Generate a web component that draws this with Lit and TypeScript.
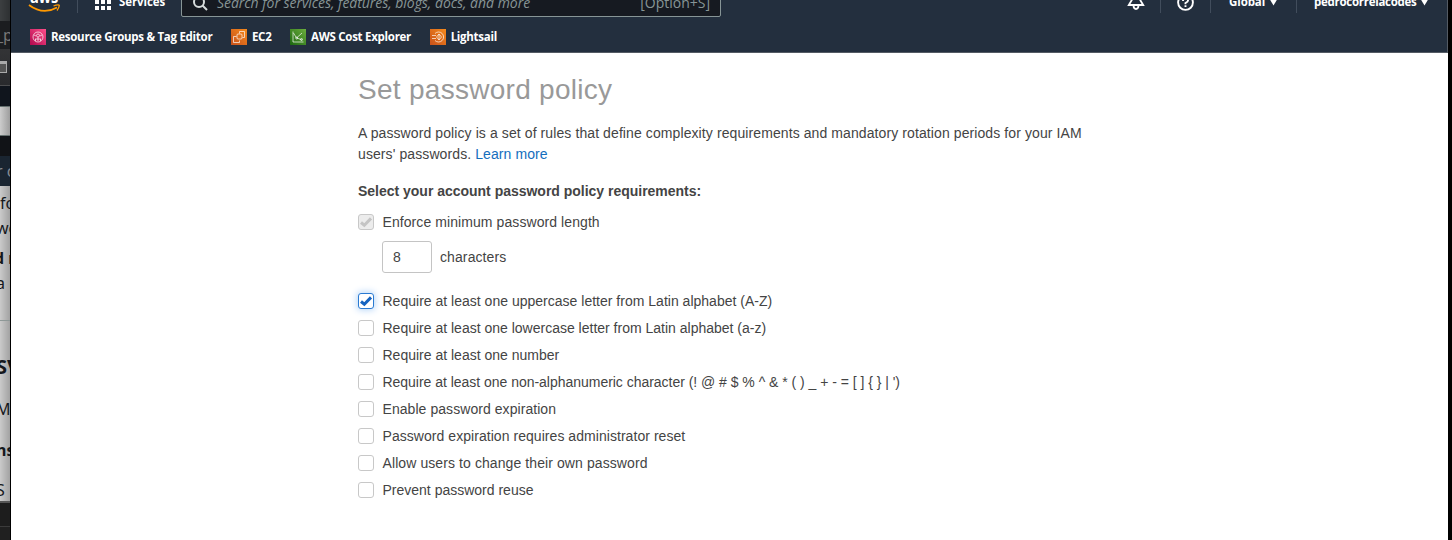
import { LitElement, html, css, svg } from "lit";
import { customElement, property } from "lit/decorators.js";
import { classMap } from "lit/directives/class-map.js";

@customElement("policy-check")
class PolicyCheck extends LitElement {
  @property() label = "";
  @property({ type: Number }) tracking = 0;
  @property({ type: Boolean }) checked = false;
  @property({ type: Boolean }) disabled = false;

  static styles = css`
    :host { display: flex; align-items: center; height: 27px; }
    .box {
      box-sizing: border-box; width: 16px; height: 16px; flex: none;
      border: 1px solid #c8c8c8; border-radius: 3px; background: #fff;
      display: flex; align-items: center; justify-content: center; margin: 0 8.5px 1px 0;
    }
    .on { border-color: #2a7ad2; box-shadow: 0 0 7px 1px #b5d5f8; color: #1563c0; }
    .off { background: #ececec; color: #c4c4c4; }
    svg { display: block; flex: none; }
    .label { white-space: pre; }
  `;

  render() {
    return html`
      <span class=${classMap({ box: true, on: this.checked && !this.disabled, off: this.disabled })}>
        ${this.checked
          ? html`<svg width="14" height="14" viewBox="0 0 14 14"><path d="M2 7.5 L5.3 10.2 L12 3.400" fill="none" stroke="currentColor" stroke-width="3"/></svg>`
          : ""}
      </span><span class="label" style="letter-spacing:${this.tracking}px">${this.label}</span>`;
  }
}

const marks = {
  groups: svg`<circle cx="8" cy="8" r="5"/><circle cx="8" cy="6.5" r="1.5"/><path d="M5 10 H11 M8 8 V12 M4 6 L6 7 M12 6 L10 7 M5.5 12 V10 M10.5 12 V10"/>`,
  ec2: svg`<rect x="6" y="5" width="5" height="5" rx="1"/><path d="M8.500 4.500V2.500H13.500V8.500H11.500M5.500 7.500H2.500V13.500H8.500V11.500"/>`,
  cost: svg`<path d="M3 2.500V13H13.500M3.500 4L6.500 9L12 4M7 9L12 11"/><circle cx="6.700" cy="9" r="1"/><circle cx="11.500" cy="10.500" r="1"/>`,
  sail: svg`<path d="M5 4.500A5 5 0 1 1 5 11.500M2 6.500H6M2 9.500H6M9 5V11M9 5L6.500 8L9 11L11.500 8Z"/>`,
};

@customElement("app-root")
class AppRoot extends LitElement {
  static styles = css`
    :host {
      display: flex; width: 1452px; height: 540px; overflow: hidden; background: #000;
      font: 14px/21px "Liberation Sans", Arial, sans-serif; color: #444;
    }
    .behind { width: 10px; flex: none; overflow: hidden; display: flex; flex-direction: column; margin-right: 1px; }
    .seg { flex: none; box-sizing: border-box; white-space: pre; display: flex; align-items: center; }
    .s1 { height: 21px; background: linear-gradient(90deg, #3c3f41, #2d3032); }
    .s2 { height: 28px; background: #1b1d20; color: #777; font: 16px "Noto Sans", sans-serif; }
    .s3 { height: 37px; background: linear-gradient(#333436, #292a2d); border-bottom: 1px solid #4c4d4f; }
    .s4 { height: 20px; background: #10151d; }
    .s5 { height: 30px; background: linear-gradient(90deg, #ccc, #9d9d9d); border-top: 1px solid #65706f; border-bottom: 1px solid #65706f; }
    .s6 { height: 20px; background: #111317; }
    .s7 { height: 30px; background: #1a2531; color: #858b91; font: 16px "Noto Sans", sans-serif; }
    .page { height: 315px; flex: none; overflow: hidden; background: linear-gradient(90deg, #cacaca, #a2a2a2); color: #15181c; font-family: "Noto Sans", sans-serif; }
    .s9 { height: 25px; background: #1d1d1d; border-top: 2px solid #555; }
    .s10 { flex: 1; background: #202020; border-top: 1px solid #3b3b3b; }
    .rule { height: 1px; background: #8e9897; }
    .h34 { height: 34px; } .h16 { height: 16px; } .h44 { height: 44px; } .h6 { height: 6px; }
    .h24 { height: 24px; } .h45 { height: 45px; } .h37 { height: 37px; }
    .h42 { height: 42px; }
    .f16 { font-size: 16px; } .f20 { font-size: 20px; }
    .b { font-weight: 700; }
    .nudge { margin-left: -4px; }
    .nudge.more { margin-left: -6px; }
    .tab-icon { width: 6px; height: 8px; border: 1px solid #aaa; border-top-width: 3px; border-left: 0; background: #555; }

    .window { width: 1437px; flex: none; display: flex; flex-direction: column; background: #fff; }
    .header {
      box-sizing: border-box; height: 53px; overflow: hidden; background: #232f3e; color: #fff;
      border-right: 1px solid #545b64; border-bottom: 1px solid #545b64;
      font: 700 11.5px/16px "Open Sans", "Noto Sans", sans-serif; letter-spacing: -0.28px;
    }
    .top { margin-top: -18px; height: 40px; display: flex; align-items: center; white-space: pre; }
    .top svg { display: block; flex: none; }
    .aws { margin-left: 16px; width: 34px; }
    .div { width: 1px; height: 22px; background: #414d5c; flex: none; }
    .div.first { margin-left: 16px; margin-right: 17px; }
    .services { margin-left: 8px; width: 62px; letter-spacing: -0.1px; }
    .search {
      box-sizing: border-box; width: 540px; height: 34px; border: 1px solid #879596; border-radius: 2px;
      background: #161a21; color: #879596; display: flex; align-items: center; padding: 0 10px 0 11px;
      font-size: 14px; font-weight: 400; margin-top: -4px; letter-spacing: 0;
    }
    .ph { margin-left: 9px; font-style: italic; flex: 1; letter-spacing: -0.04px; margin-top: 6px; }
    .key { margin-top: 6px; }
    .search svg { margin-top: 6px; }
    .right { margin-left: auto; display: flex; align-items: center; height: 100%; }
    .bell { margin: -2px 15px 0 0; }
    .help { margin: 0 16px; }
    .global { margin-left: 18px; width: 40px; letter-spacing: -0.1px; }
    .user { margin-left: 17px; width: 106px; }
    .caret { margin-right: 18px; }
    .favs { display: flex; align-items: center; height: 30px; padding-left: 19px; gap: 18.6px; white-space: pre; }
    .fav { display: flex; align-items: center; gap: 5px; }
    .mark { display: block; stroke: #fff; stroke-opacity: .75; fill: none; stroke-width: .9; }
    .groups { background: linear-gradient(45deg, #b0084d, #ff4f8b); }
    .ec2, .sail { background: linear-gradient(45deg, #c8511b, #f58a1c); }
    .cost { background: linear-gradient(45deg, #1b660f, #6cae3e); }

    .main { padding: 19px 0 0 347px; width: 740px; display: flex; flex-direction: column; }
    h1 { margin: 0; font-size: 28px; line-height: 36px; font-weight: 400; color: #999; letter-spacing: 0.28px; }
    .intro { margin-top: 15px; }
    .line { white-space: pre; letter-spacing: 0.095px; }
    .link { color: #146ebd; }
    h2 { margin: 16px 0 0; font-size: 14px; line-height: 21px; letter-spacing: -0.015px; }
    .first-check { margin-top: 7px; }
    .length { display: flex; align-items: center; margin: 5px 0 15px 24px; gap: 8px; letter-spacing: 0.1px; }
    .input { box-sizing: border-box; width: 50px; height: 32px; border: 1px solid #c4c4c4; border-radius: 3px; padding-left: 10px; display: flex; align-items: center; }
  `;

  private fav(kind: keyof typeof marks, name: string) {
    return html`<span class="fav"><svg class="mark ${kind}" width="16" height="16" viewBox="0 0 16 16">${marks[kind]}</svg><span>${name}</span></span>`;
  }

  private caret() {
    return html`<svg class="caret" width="9" height="8" viewBox="0 0 9 8"><path d="M0 0H9L4.500 7.500Z" fill="#fff"/></svg>`;
  }

  render() {
    const rules: [string, number][] = [
      ["Require at least one uppercase letter from Latin alphabet (A-Z)", 0.01],
      ["Require at least one lowercase letter from Latin alphabet (a-z)", 0],
      ["Require at least one number", 0],
      ["Require at least one non-alphanumeric character (! @ # $ % ^ & * ( ) _ + - = [ ] { } | ')", -0.025],
      ["Enable password expiration", 0.06],
      ["Password expiration requires administrator reset", 0.05],
      ["Allow users to change their own password", 0.09],
      ["Prevent password reuse", 0],
    ];
    return html`
      <div class="behind">
        <div class="seg s1"></div>
        <div class="seg s2"><span class="nudge">_p</span></div>
        <div class="seg s3"><span class="tab-icon"></span></div>
        <div class="seg s4"></div><div class="seg s5"></div><div class="seg s6"></div>
        <div class="seg s7"><span class="nudge">r c</span></div>
        <div class="page">
          <div class="seg h34 f16">fo</div>
          <div class="seg h16 f16"><span class="nudge">wo</span></div>
          <div class="seg h44 f16 b"><span class="nudge more">d n</span></div>
          <div class="seg h6 f16"><span class="nudge">a n</span></div>
          <div class="h34"></div>
          <div class="rule"></div>
          <div class="h24"></div>
          <div class="seg h42 f20 b"><span class="nudge">SV</span></div>
          <div class="seg h45 f16"><span class="nudge">M.</span></div>
          <div class="seg h37 f16 b"><span class="nudge">ns</span></div>
          <div class="seg h42 f16"><span class="nudge">S</span></div>
        </div>
        <div class="seg s9"></div><div class="seg s10"></div>
      </div>
      <div class="window">
        <div class="header">
          <div class="top">
            <svg class="aws" width="34" height="30" viewBox="0 0 34 30">
              <text x="3" y="16" font-family="Open Sans, sans-serif" font-weight="700" font-size="18" textLength="28" lengthAdjust="spacingAndGlyphs" fill="#fff">aws</text>
              <path d="M2 18Q16 28.500 30 20.500" fill="none" stroke="#f90" stroke-width="1.800"/>
              <path d="M26.500 19Q32 17 32.300 18.500Q32 21 30 23.500" fill="none" stroke="#f90" stroke-width="1.300"/>
            </svg>
            <span class="div first"></span>
            <svg width="16" height="16" viewBox="0 0 16 16" fill="#fff">
              ${[0, 6, 12].map((y) => [0, 6, 12].map((x) => svg`<rect x=${x} y=${y} width="4" height="4"/>`))}
            </svg>
            <span class="services">Services</span>
            <div class="search">
              <svg width="15" height="15" viewBox="0 0 15 15" fill="none" stroke="#d5dbdb" stroke-width="2"><circle cx="6" cy="6" r="5"/><path d="M9.500 9.500L14 14"/></svg>
              <span class="ph">Search for services, features, blogs, docs, and more</span>
              <span class="key">[Option+S]</span>
            </div>
            <div class="right">
              <svg class="bell" width="18" height="18" viewBox="0 0 18 18" fill="none" stroke="#fff" stroke-width="1.800"><path d="M9 1C5.500 1 4.800 3 4.800 5V8L1.800 13H16.200L13.200 8V5C13.200 3 12.500 1 9 1ZM6.500 13.500Q6.700 17 9 17T11.500 13.500"/></svg>
              <span class="div"></span>
              <svg class="help" width="17" height="17" viewBox="0 0 17 17" fill="none" stroke="#fff" stroke-width="1.900"><circle cx="8.500" cy="8.500" r="7.400"/><path d="M6 7Q6 4.500 8.500 4.500T11 6.700Q11 7.700 8.500 9V10.300M8.500 11.300V13"/></svg>
              <span class="div"></span>
              <span class="global">Global</span>${this.caret()}
              <span class="div"></span>
              <span class="user">pedrocorreiacodes</span>${this.caret()}
            </div>
          </div>
          <div class="favs">
            ${this.fav("groups", "Resource Groups & Tag Editor")}
            ${this.fav("ec2", "EC2")}
            ${this.fav("cost", "AWS Cost Explorer")}
            ${this.fav("sail", "Lightsail")}
          </div>
        </div>
        <div class="main">
          <h1>Set password policy</h1>
          <div class="intro">
            <div class="line">A password policy is a set of rules that define complexity requirements and mandatory rotation periods for your IAM</div>
            <div class="line">users' passwords. <span class="link">Learn more</span></div>
          </div>
          <h2>Select your account password policy requirements:</h2>
          <policy-check class="first-check" label="Enforce minimum password length" .tracking=${0.08} checked disabled></policy-check>
          <div class="length"><span class="input">8</span><span>characters</span></div>
          ${rules.map(([r, t], i) => html`<policy-check .label=${r} .tracking=${t} ?checked=${i === 0}></policy-check>`)}
        </div>
      </div>`;
  }
}
